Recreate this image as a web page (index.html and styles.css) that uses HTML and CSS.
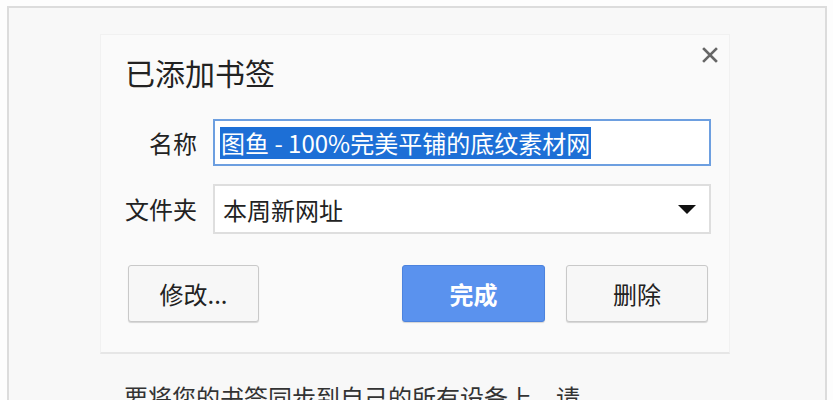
FILE: index.html
```html
<!DOCTYPE html>
<html lang="zh-CN">
<head>
    <meta charset="UTF-8">
    <meta name="viewport" content="width=device-width, initial-scale=1.0">
    <title>已添加书签</title>
    <link rel="stylesheet" href="styles.css">
</head>
<body>
    <div class="frame">
        <div class="bubble">
            <div class="bubble-head">
                <div class="title">已添加书签</div>
                <button class="close" title="关闭">
                    <svg width="16" height="16" viewBox="0 0 16 16">
                        <path d="M2 2 L14 14 M14 2 L2 14" stroke="#666" stroke-width="2.6" stroke-linecap="square" fill="none"/>
                    </svg>
                </button>
            </div>
            <div class="form">
                <label class="label">名称</label>
                <div class="field name-field"><span class="sel">图鱼 - 100%完美平铺的底纹素材网</span></div>
                <label class="label">文件夹</label>
                <div class="field folder-field">
                    <span>本周新网址</span>
                    <span class="arrow"></span>
                </div>
            </div>
            <div class="actions">
                <button class="btn edit">修改...</button>
                <div class="spacer"></div>
                <button class="btn done">完成</button>
                <button class="btn remove">删除</button>
            </div>
        </div>
        <div class="sync">要将您的书签同步到自己的所有设备上，请</div>
    </div>
</body>
</html>
```

FILE: styles.css
```css
body {
    font-family: "Noto Sans CJK SC", "Noto Sans", sans-serif;
    background-color: #fdfdfd;
    margin: 0;
    color: #222;
}
.frame {
    margin: 6px 6px 0 7px;
    height: 420px;
    border: 2px solid #dcdcdc;
    border-bottom: none;
    background-color: #f8f8f8;
    padding-top: 26px;
}
.bubble {
    margin: 0 95px 0 91px;
    padding: 19px 18px 30px 24px;
    background-color: #fafafa;
    border: 1px solid #f1f1f1;
    border-bottom: 2px solid #e6e6e6;
}
.bubble-head {
    display: flex;
    justify-content: space-between;
    align-items: flex-start;
}
.title {
    font-size: 30px;
    line-height: 36px;
}
.close {
    background: none;
    border: none;
    padding: 0;
    margin: -7px -7px 0 0;
    width: 16px;
    height: 16px;
    cursor: pointer;
}
.close svg {
    display: block;
}
.form {
    display: grid;
    grid-template-columns: 72px 1fr;
    column-gap: 16px;
    row-gap: 18px;
    align-items: center;
    margin-top: 29px;
}
.label {
    font-size: 24px;
    text-align: right;
    line-height: 32px;
}
.field {
    box-sizing: border-box;
    background-color: #fff;
    font-size: 24px;
    display: flex;
    align-items: center;
}
.name-field {
    height: 47px;
    border: 2px solid #6d9fe0;
    padding: 0 5px;
}
.sel {
    background-color: #1d6fd6;
    color: #fff;
    line-height: 32px;
    padding: 0 1px;
}
.folder-field {
    height: 50px;
    border: 2px solid #dedede;
    padding: 0 12px 0 8px;
    justify-content: space-between;
}
.arrow {
    width: 0;
    height: 0;
    border-left: 9px solid transparent;
    border-right: 9px solid transparent;
    border-top: 9px solid #111;
    margin-right: 1px;
}
.actions {
    display: flex;
    gap: 21px;
    margin-top: 31px;
    padding: 0 3px;
}
.spacer {
    flex: 1;
}
.btn {
    font-family: inherit;
    font-size: 24px;
    height: 57px;
    border-radius: 3px;
    border: 1px solid #c9c9c9;
    background-color: #f7f7f7;
    color: #222;
    box-shadow: 0 1px 1px rgba(0, 0, 0, 0.15);
    cursor: pointer;
}
.edit {
    width: 131px;
}
.done {
    width: 143px;
    background-color: #5a92ee;
    border-color: #4c83de;
    color: #fff;
    font-weight: bold;
}
.remove {
    width: 142px;
}
.sync {
    margin: 25px 0 0 91px;
    padding-left: 24px;
    font-size: 24px;
    line-height: 36px;
    color: #333;
}
```
